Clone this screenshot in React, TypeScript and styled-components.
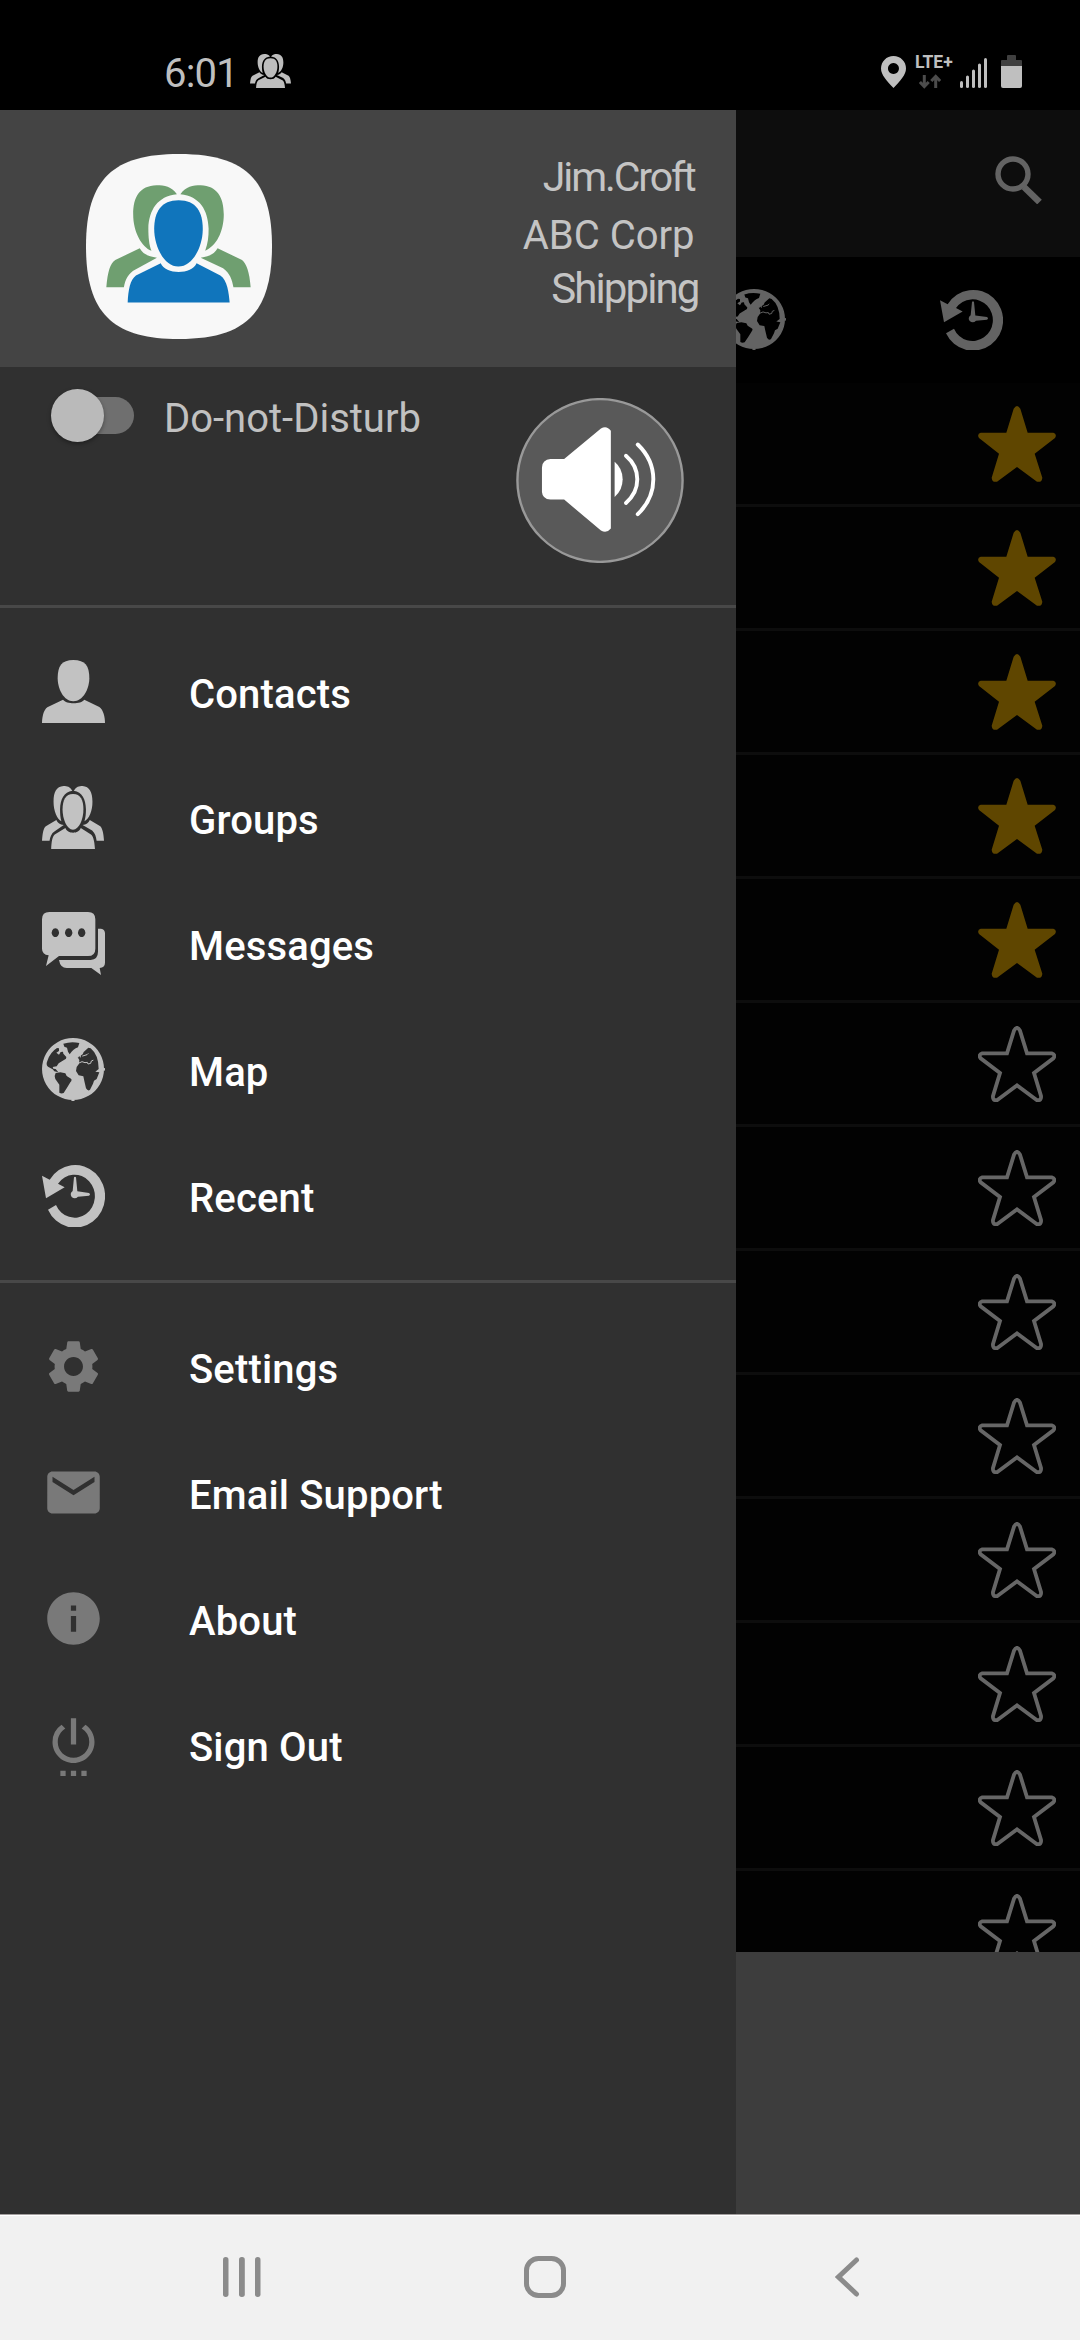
import React from "react";
import styled, { createGlobalStyle } from "styled-components";
import { MdSettings, MdEmail, MdInfo, MdSettingsPower } from "react-icons/md";

const GlobalStyle = createGlobalStyle`
  * { box-sizing: border-box; }
  body { margin: 0; background: #000; font-family: Roboto, "Noto Sans", sans-serif; }
  svg { display: block; flex: none; }
`;

/* ---------- icons ---------- */

type IconProps = { width?: number; height?: number; color?: string };

const GROUP_BACK = [
  "M514 582C498 558 478 555 455 555C405 557 387 590 387 643C387 695 412 742 440 752C433 735 431 710 431 685C433 630 457 588 514 582Z",
  "M524 582C540 558 560 555 583 555C630 557 650 590 650 643C650 695 628 738 596 752C604 730 606 710 606 685C604 630 581 588 524 582Z",
  "M406 745C415 762 430 770 456 773L395 808C372 820 364 840 360 862H309C313 815 320 790 335 780Z",
  "M632 745C623 762 608 770 583 773L648 805C668 820 674 840 678 862H728C725 815 715 790 703 780Z",
];
const GROUP_FRONT = [
  "M519 600C570 600 589 635 589 687C589 740 560 800 518 800C477 800 448 740 448 687C448 635 468 600 519 600Z",
  "M467 790C480 825 558 825 571 790L640 827C660 840 665 880 667 908H371C373 870 378 840 395 827Z",
];

const GroupIcon = ({ width = 62, height = 63, color = "#c2c2c2" }: IconProps) => (
  <svg width={width} height={height} viewBox="309 555 419 353" preserveAspectRatio="none" fill={color}>
    {[...GROUP_BACK, ...GROUP_FRONT].map((d) => (
      <path key={d} d={d} />
    ))}
  </svg>
);

const AppLogo = () => (
  <svg width="186" height="185" viewBox="250 461 540 557" preserveAspectRatio="none">
    <path
      fill="#f8f8f8"
      d="M250 739C250 535 330 461 520 461C710 461 790 535 790 739C790 943 710 1018 520 1018C330 1018 250 943 250 739Z"
    />
    <g fill="#6f9f70">
      {GROUP_BACK.map((d) => (
        <path key={d} d={d} />
      ))}
    </g>
    <g fill="#1075bc">
      {GROUP_FRONT.map((d) => (
        <path key={d} d={d} />
      ))}
    </g>
  </svg>
);

const ContactIcon = ({ height = 63, color = "#c2c2c2" }: IconProps) => (
  <svg width="63" height={height} viewBox="126 120 189 189" preserveAspectRatio="none" fill={color}>
    <path d="M220 120C256 120 268 138 268 175C268 205 250 244 220 244C190 244 173 205 173 175C173 138 185 120 220 120Z" />
    <path d="M189 239C200 253 242 253 253 239L298 261C310 270 315 290 315 309H126C127 285 132 270 142 262Z" />
  </svg>
);

const MessagesIcon = ({ height = 63, color = "#c2c2c2" }: IconProps) => (
  <svg width="63" height={height} viewBox="126 876 189 189" preserveAspectRatio="none" fill={color}>
    <path
      fillRule="evenodd"
      d="M148 876H264Q286 876 286 898V986Q286 1008 264 1008H177L138 1038L146 1006Q126 1003 126 986V898Q126 876 148 876ZM166 925a11 13 0 1 0 .1 0ZM206 925a11 13 0 1 0 .1 0ZM245 925a11 13 0 1 0 .1 0Z"
    />
    <path d="M294 926H303Q315 928 315 940V1028Q315 1042 299 1044L303 1065L274 1044H200Q181 1044 177 1020H272Q294 1018 294 995Z" />
  </svg>
);

const GlobeIcon = ({ height = 63, color = "#c2c2c2" }: IconProps) => (
  <svg width="63" height={height} viewBox="6 5 189 189" preserveAspectRatio="none">
    <path
      fill={color}
      fillRule="evenodd"
      d="M99 5a93 93 0 1 0 .1 0Z
      M70 22Q94 14 118 20L114 33Q100 38 89 54L84 46L81 34L73 31Z
      M51 35Q30 48 22 74Q17 86 24 91L38 99L43 105L55 108L47 98L40 97L38 92L50 90L56 81L78 67L79 62L70 52L69 46L62 47L57 55L49 49L57 44L57 36Z
      M47 110L61 108L76 111L80 119L93 127Q97 131 91 138Q83 152 71 170Q64 173 58 169L58 145L46 128L44 119Z
      M145 34L131 47L128 54L119 60L113 63L118 71L117 82L110 92L108 104L116 117L130 120L133 134L138 156Q144 166 150 160L159 142L162 133L170 128L178 108L166 106L176 98Q176 56 152 36Z"
    />
    <g fill="none" stroke={color} strokeWidth="3" strokeLinecap="round" strokeLinejoin="round">
      <path d="M117 80L126 76L135 79L142 78L144 83L152 81L154 74L159 72" />
      <path d="M114 62L112 55M121 62L120 52M128 59L141 55L144 52" />
    </g>
    <path fill={color} d="M92 190h14l-4 4h-6ZM191 94l4 2v6l-4 3Z" />
  </svg>
);

const RecentIcon = ({ height = 63, color = "#c2c2c2" }: IconProps) => (
  <svg width="63" height={height} viewBox="126 552 189 189" preserveAspectRatio="none" fill={color}>
    <path d="M144 689L168 675A61 64.5 0 1 0 174 611L194 622L138 655L126 587L149 599A90 94 0 1 1 144 689Z" />
    <path d="M222 592Q225 588 228 592L232 634L267 639Q273 643 267 647L234 650Q225 659 215 651Q208 641 218 633Z" />
  </svg>
);

const SearchIcon = () => (
  <svg width="48" height="48" viewBox="0 0 48 48" fill="none" stroke="#636363">
    <circle cx="18" cy="18" r="15" strokeWidth="5.4" />
    <path d="M29 31L44.5 46" strokeWidth="6.6" />
  </svg>
);

const StarIcon = ({ filled }: { filled: boolean }) => (
  <svg width="78" height="76" viewBox="774 108 234 228" preserveAspectRatio="none">
    {filled ? (
      <path
        fill="#5f4600"
        d="M881 116Q891 100 901 116L923 188H1000Q1012 192 1005 204L944 251L967 323Q966 338 951 335L891 291L831 335Q816 338 815 323L837 251L777 204Q770 192 782 188H859Z"
      />
    ) : (
      <path
        fill="none"
        stroke="#666"
        strokeWidth="11.5"
        d="M882 122Q891 105 900 122L921 190H995Q1008 194 1000 205L942 249L963 318Q965 333 950 330L891 286L832 330Q817 333 819 318L840 249L782 205Q774 194 787 190H861Z"
      />
    )}
  </svg>
);

const SpeakerIcon = () => (
  <svg width="168" height="165" viewBox="1092 83 356 497" preserveAspectRatio="none">
    <ellipse cx="1270" cy="331.5" rx="175" ry="245" fill="#595959" stroke="#999" strokeWidth="2.4" vectorEffect="non-scaling-stroke" />
    <g fill="#fff">
      <path d="M1165 267H1194L1272 175Q1284 164 1293 182V476Q1284 492 1272 482L1194 389H1165Q1148 387 1147 366V292Q1148 269 1165 267Z" />
      <path d="M1301 275Q1318 295 1318 328Q1318 361 1301 381Z" />
    </g>
    <g fill="none" stroke="#fff" strokeLinecap="round" strokeWidth="3.9">
      <path vectorEffect="non-scaling-stroke" d="M1325 257Q1349 286 1349 328Q1349 370 1325 399" />
      <path vectorEffect="non-scaling-stroke" d="M1350 223Q1383 268 1383 328Q1383 388 1350 433" />
    </g>
  </svg>
);

const PinIcon = () => (
  <svg width="25" height="32" viewBox="0 0 25 32" fill="#bfbfbf">
    <path fillRule="evenodd" d="M12.5 0C5.5 0 0 5.5 0 12.5C0 19 6 25 12.5 32C19 25 25 19 25 12.5C25 5.5 19.5 0 12.5 0ZM12.5 7a5.500 5.500 0 1 1-.1 0Z" />
  </svg>
);

const DataArrows = () => (
  <svg width="22" height="15" viewBox="0 0 22 15" fill="none" stroke="#4c4c4c" strokeWidth="3">
    <path d="M5.3 1V13M.9 8L5.3 12.6L9.7 8" />
    <path d="M16.7 14V2M12.3 7L16.7 2.4L21.1 7" />
  </svg>
);

const SignalIcon = () => (
  <svg width="27" height="30" viewBox="0 0 27 30" fill="#bfbfbf">
    <rect x="0" y="23" width="3" height="7" rx="1.5" />
    <rect x="6" y="17.5" width="3" height="12.5" rx="1.5" />
    <rect x="12" y="11.5" width="3" height="18.5" rx="1.5" />
    <rect x="18" y="5.5" width="3" height="24.5" rx="1.5" />
    <rect x="24" y="0" width="3" height="30" rx="1.5" />
  </svg>
);

const BatteryIcon = () => (
  <svg width="21" height="33" viewBox="0 0 21 33">
    <path fill="#404040" d="M6 1Q6 0 7 0H14Q15 0 15 1V5H20Q21 5 21 6V11H0V6Q0 5 1 5H6Z" />
    <path fill="#bfbfbf" d="M0 11H21V31Q21 33 19 33H2Q0 33 0 31Z" />
  </svg>
);

/* ---------- layout ---------- */

const Screen = styled.div`
  width: 1080px;
  height: 2340px;
  display: flex;
  flex-direction: column;
  overflow: hidden;
  background: #000;
`;

const StatusBar = styled.header`
  height: 110px;
  flex: none;
  display: flex;
  justify-content: space-between;
  align-items: flex-start;
  padding: 54px 58px 0 164px;
`;

const StatusLeft = styled.div`
  display: flex;
  gap: 13px;
`;

const Clock = styled.span`
  width: 73px;
  font-size: 40px;
  line-height: 40px;
  letter-spacing: -0.8px;
  color: #bfbfbf;
  white-space: nowrap;
`;

const StatusRight = styled.div`
  display: flex;
  align-items: flex-start;
  padding-top: 1px;
`;

const StatusSlot = styled.div<{ $top?: number; $gap?: number }>`
  margin-top: ${(p) => p.$top ?? 0}px;
  margin-left: ${(p) => p.$gap ?? 0}px;
`;

const Network = styled.div`
  width: 38px;
  margin: 0 7px 0 9px;
  display: flex;
  flex-direction: column;
  align-items: flex-start;
`;

const NetworkLabel = styled.span`
  font: 700 17.5px/15px Roboto, sans-serif;
  color: #bfbfbf;
`;

const ArrowsRow = styled.div`
  padding: 4px 0 0 4px;
`;

const Main = styled.main`
  height: 2104px;
  flex: none;
  display: grid;
  overflow: hidden;
`;

const Page = styled.section`
  grid-area: 1 / 1;
  display: flex;
  flex-direction: column;
  min-height: 0;
  height: 2104px;
`;

const AppBar = styled.div`
  height: 147px;
  flex: none;
  display: flex;
  justify-content: flex-end;
  padding: 46px 37px 0 0;
  background: #0d0d0d;
`;

const Tabs = styled.div`
  height: 126px;
  flex: none;
  display: grid;
  grid-template-columns: repeat(5, 217px);
  margin-left: -5px;
  padding-bottom: 2px;
  align-items: center;
  justify-items: center;
`;

const ContactList = styled.div`
  height: 1569px;
  flex: none;
  overflow: hidden;
  background: #020202;
`;

const ContactRow = styled.div`
  height: 124px;
  display: flex;
  align-items: center;
  justify-content: flex-end;
  padding: 1px 24px 0 0;
  border-bottom: 3px solid #0d0d0d;
`;

const Footer = styled.div`
  flex: 1;
  background: #3d3d3d;
`;

const Drawer = styled.nav`
  grid-area: 1 / 1;
  z-index: 1;
  width: 736px;
  height: 2104px;
  background: #303030;
`;

const Profile = styled.div`
  height: 257px;
  display: flex;
  justify-content: space-between;
  padding: 44px 37px 0 86px;
  background: #444;
`;

const Names = styled.div`
  display: flex;
  flex-direction: column;
  align-items: flex-end;
`;

const Name = styled.span<{ $size: number; $line: number; $tight?: number; $shift?: number }>`
  font-size: ${(p) => p.$size}px;
  line-height: ${(p) => p.$line}px;
  letter-spacing: ${(p) => p.$tight ?? 0}px;
  margin-right: ${(p) => p.$shift ?? 0}px;
  color: #c4c4c4;
  white-space: nowrap;
`;

const Controls = styled.div`
  height: 238px;
  display: flex;
  justify-content: space-between;
  align-items: flex-start;
  padding: 0 52px 0 51px;
`;

const Dnd = styled.label`
  display: flex;
  align-items: center;
  margin-top: 21px;
  gap: 30px;
`;

const Toggle = styled.span`
  width: 83px;
  height: 53px;
  display: flex;
  align-items: center;
`;

const Thumb = styled.span`
  width: 53px;
  height: 53px;
  flex: none;
  z-index: 1;
  border-radius: 50%;
  background: #bababa;
  box-shadow: 0 2px 4px rgba(0, 0, 0, 0.35);
`;

const Track = styled.span`
  width: 56px;
  height: 37px;
  margin-left: -26px;
  border-radius: 0 19px 19px 0;
  background: #6f6f6f;
`;

const DndLabel = styled.span`
  font-size: 40px;
  line-height: 48px;
  padding-top: 7px;
  color: #c1c1c1;
  white-space: nowrap;
`;

const SpeakerButton = styled.div`
  margin-top: 31px;
`;

const MenuSection = styled.ul`
  margin: 0;
  padding: 21px 0;
  list-style: none;
  border-top: 3px solid #484848;
`;

const MenuItem = styled.li`
  height: 126px;
  display: flex;
  align-items: center;
  padding-left: 42px;
  color: #797979;
`;

const MenuLabel = styled.span`
  margin-left: 84px;
  padding-top: 5px;
  font-size: 40px;
  font-weight: 500;
  line-height: 48px;
  letter-spacing: 0.15px;
  color: #fff;
  white-space: nowrap;
`;

const IconBox = styled.span`
  width: 63px;
  height: 63px;
  margin-bottom: 1px;
  flex: none;
`;

const NavBar = styled.footer`
  flex: 1;
  display: grid;
  grid-template-columns: repeat(3, 302.5px);
  justify-items: center;
  align-items: center;
  padding: 0 0 1px 91px;
  background: #f1f1f1;
  border-top: 1px solid #a29e9e;
  box-shadow: inset 0 1px 0 #fff;
`;

const primary = [
  { label: "Contacts", icon: <ContactIcon /> },
  { label: "Groups", icon: <GroupIcon /> },
  { label: "Messages", icon: <MessagesIcon /> },
  { label: "Map", icon: <GlobeIcon /> },
  { label: "Recent", icon: <RecentIcon /> },
];

const secondary = [
  { label: "Settings", icon: <MdSettings size={63} /> },
  { label: "Email Support", icon: <MdEmail size={63} /> },
  { label: "About", icon: <MdInfo size={63} /> },
  { label: "Sign Out", icon: <MdSettingsPower size={63} /> },
];

const favourites = Array.from({ length: 13 }, (_, i) => i < 5);
const TAB = { color: "#636363", height: 61 };

const Menu = ({ items }: { items: { label: string; icon: React.ReactNode }[] }) => (
  <MenuSection>
    {items.map((item) => (
      <MenuItem key={item.label}>
        <IconBox>{item.icon}</IconBox>
        <MenuLabel>{item.label}</MenuLabel>
      </MenuItem>
    ))}
  </MenuSection>
);

export default function App() {
  return (
    <Screen>
      <GlobalStyle />
      <StatusBar>
        <StatusLeft>
          <Clock>6:01</Clock>
          <GroupIcon width={41} height={34} color="#bdbdbd" />
        </StatusLeft>
        <StatusRight>
          <StatusSlot $top={1}>
            <PinIcon />
          </StatusSlot>
          <Network>
            <NetworkLabel>LTE+</NetworkLabel>
            <ArrowsRow>
              <DataArrows />
            </ArrowsRow>
          </Network>
          <StatusSlot $top={3}>
            <SignalIcon />
          </StatusSlot>
          <StatusSlot $gap={14}>
            <BatteryIcon />
          </StatusSlot>
        </StatusRight>
      </StatusBar>

      <Main>
        <Page>
          <AppBar>
            <SearchIcon />
          </AppBar>
          <Tabs>
            <ContactIcon {...TAB} />
            <GroupIcon {...TAB} />
            <MessagesIcon {...TAB} />
            <GlobeIcon {...TAB} />
            <RecentIcon {...TAB} />
          </Tabs>
          <ContactList>
            {favourites.map((filled, i) => (
              <ContactRow key={i}>
                <StarIcon filled={filled} />
              </ContactRow>
            ))}
          </ContactList>
          <Footer />
        </Page>

        <Drawer>
          <Profile>
            <AppLogo />
            <Names>
              <Name $size={41} $line={46} $tight={-2.1} $shift={4.5}>Jim.Croft</Name>
              <Name $size={40} $line={72} $shift={4.5}>ABC Corp</Name>
              <Name $size={42} $line={34} $tight={-1.9} $shift={0.5}>Shipping</Name>
            </Names>
          </Profile>
          <Controls>
            <Dnd>
              <Toggle>
                <Thumb />
                <Track />
              </Toggle>
              <DndLabel>Do-not-Disturb</DndLabel>
            </Dnd>
            <SpeakerButton>
              <SpeakerIcon />
            </SpeakerButton>
          </Controls>
          <Menu items={primary} />
          <Menu items={secondary} />
        </Drawer>
      </Main>

      <NavBar>
        <svg width="38" height="40" viewBox="0 0 38 40" fill="#8b8b8b">
          <rect x="0" width="5.5" height="40" rx="2.7" />
          <rect x="16" width="5.8" height="40" rx="2.7" />
          <rect x="32" width="5.5" height="40" rx="2.7" />
        </svg>
        <svg width="42" height="42" viewBox="0 0 42 42" fill="none" stroke="#8b8b8b" strokeWidth="5">
          <rect x="2.5" y="2.5" width="37" height="37" rx="12" />
        </svg>
        <svg width="25" height="40" viewBox="0 0 25 40" fill="none" stroke="#8b8b8b" strokeWidth="5" strokeLinecap="round">
          <path d="M21.5 3L3.5 20L21.5 37" />
        </svg>
      </NavBar>
    </Screen>
  );
}
